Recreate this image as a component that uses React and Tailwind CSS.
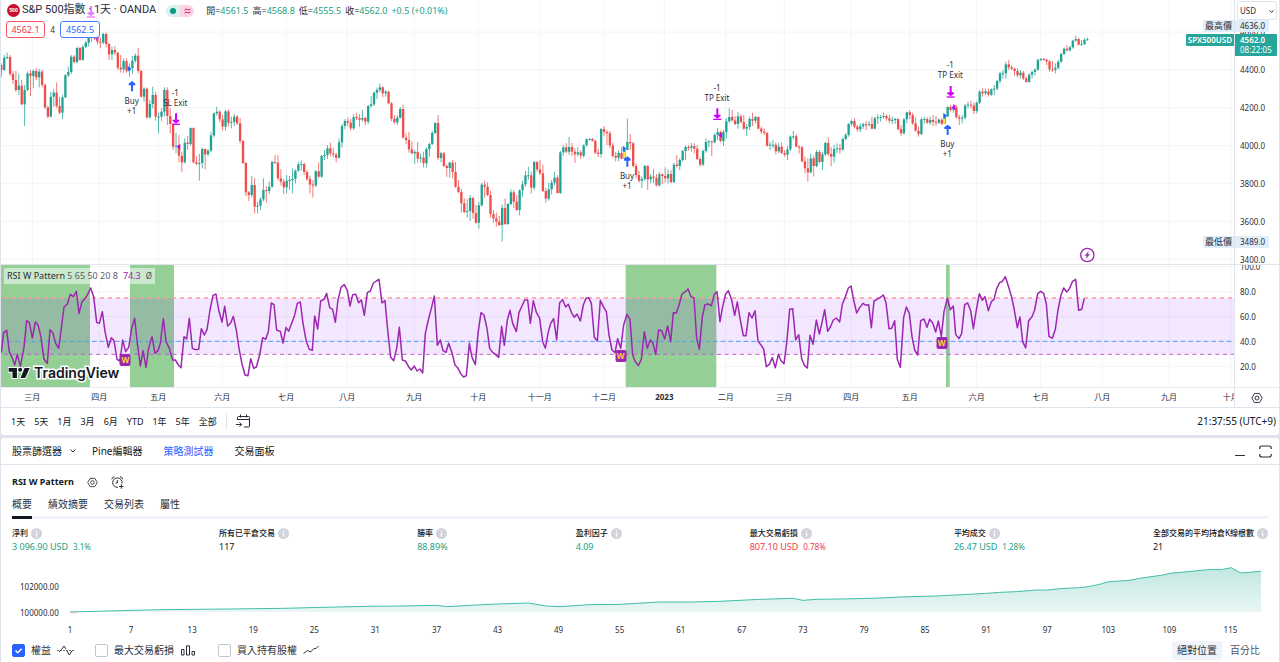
import { useState } from "react";

// Plot space is 3 units per pixel at full width, x from 3 to 3702.
// Every bar is [high, low, close] and opens at the previous close.
const PLOT_X = 3;
const PLOT_W = 3699;
const PLOT_END = 3702;
const STEP = 8.735;
const FIRST_OPEN = 195;
const BARS = `
190 232 210|165 212 173|158 178 171|165 228 222|213 252 240|213 276 270|222 285 257|240 316 313|255 378 270|215 273 220|210 288 228|208 265 213|205 240 232|207 262 215|210 262 255|250 328 322|318 355 350|275 352 290|268 320 278|247 325 318|290 343 338|285 357 292|222 294 226|200 231 216|165 222 170|165 190 186|140 190 144|140 182 180|135 182 141|122 145 128|100 140 112|98 125 105|90 120 108|105 133 125|112 145 128|98 133 102|97 142 132|128 180 163|140 180 150|138 165 158|155 210 203|165 218 208|175 218 183|175 218 212|190 230 205|168 222 182|160 188 167|143 220 213|209 293 290|262 305 266|262 356 352|300 356 312|260 325 285|275 362 350|338 400 350|325 362 335|262 350 270|262 375 348|325 400 372|370 450 440|398 460 437|405 487 467|455 517 487|415 490 428|408 450 432|382 438 384|382 490 487|468 495 492|462 542 489|443 505 447|445 508 463|447 468 452|395 456 406|338 412 340|320 347 335|330 367 358|345 392 380|330 392 334|328 380 368|350 385 366|342 378 350|345 375 370|354 430 423|420 492 489|486 588 577|573 603 585|528 592 555|534 640 620|605 640 617|592 630 598|535 604 570|558 608 573|545 582 560|482 563 486|465 492 488|465 542 535|508 556 545|537 582 562|525 580 542|528 570 540|505 580 537|508 550 512|485 515 493|482 512 492|488 525 516|510 543 537|527 580 554|540 592 556|510 562 514|487 535 530|
465 533 468|450 480 465|435 477 445|428 470 460|443 472 464|458 487 473|415 476 427|372 442 378|357 388 363|353 380 368|357 392 385|342 390 351|338 360 354|343 380 359|330 365 354|350 375 365|315 372 318|288 323 313|275 318 278|263 297 270|250 277 262|258 292 280|270 290 275|273 313 310|306 363 356|345 372 367|345 375 353|321 356 327|314 415 413|400 432 420|396 458 448|425 463 460|450 491 456|426 488 476|460 488 473|455 502 490|442 502 447|428 470 432|393 435 399|367 402 369|345 481 474|456 486 460|456 501 498|493 530 504|485 533 488|480 535 516|486 564 560|540 580 576|566 638 610|595 640 636|597 653 633|585 663 594|590 656 639|615 671 668|606 686 616|549 620 554|542 593 560|547 588 585|572 653 642|630 668 655|638 680 665|648 678 675|614 725 624|595 675 672|609 675 612|568 616 577|570 624 605|585 633 630|568 646 571|542 590 553|513 560 526|500 540 526|515 580 563|483 570 486|484 515 508|480 525 520|494 576 573|564 608 596|548 602 568|540 583 548|515 556 533|525 581 579|453 581 457|435 468 442|429 460 455|411 465 441|429 468 455|445 489 463|442 470 457|450 477 467|433 473 436|415 440 418|414 421 417|414 425 422|420 462 458|446 471 462|384 472 387|378 407 396|390 435 400|393 445 436|428 472 468|456 484 473|450 484 459|
442 478 476|440 475 450|356 448 426|402 450 430|425 502 498|490 535 525|512 548 542|530 564 537|495 542 498|495 570 538|522 550 530|506 550 534|522 560 556|516 560 523|520 552 528|502 548 535|508 550 522|510 550 546|489 549 494|465 503 498|474 510 480|450 484 453|436 480 441|435 452 443|429 455 438|430 460 446|435 480 477|472 500 494|448 498 453|415 458 426|420 442 424|422 468 427|400 430 405|383 420 396|392 427 423|390 438 396|354 416 364|325 368 351|330 365 361|348 376 372|335 386 349|342 370 366|345 390 386|372 408 381|350 390 357|338 378 362|348 370 351|349 388 386|380 402 395|385 405 399|396 440 437|426 450 434|420 445 434|427 463 454|429 459 440|427 462 459|450 470 464|438 480 448|406 453 410|393 418 409|402 442 440|435 460 442|438 487 484|470 520 505|475 545 517|460 520 475|468 530 498|450 502 456|450 490 486|455 510 463|425 468 429|412 468 462|442 498 470|434 488 447|430 460 445|432 462 449|413 452 417|399 421 405|370 410 372|358 378 363|354 385 380|375 395 388|370 396 379|368 387 373|363 390 375|363 380 372|350 388 386|350 388 355|343 372 352|345 365 351|338 356 348|343 362 355|345 370 362|350 372 360|353 372 357|355 392 387|375 407 400|354 404 358|335 370 337|330 358 345|338 375 370|352 395 392|380 410 402|
352 405 358|350 370 357|352 372 368|350 375 360|345 378 366|348 378 368|355 372 359|355 375 371|342 372 350|318 350 321|315 335 330|312 338 322|315 355 352|345 375 356|345 370 353|312 358 317|305 325 314|303 325 317|308 342 333|304 340 308|270 312 275|265 290 280|266 286 274|265 290 284|265 288 268|255 285 266|240 270 243|215 250 220|210 236 220|185 236 193|180 210 202|195 210 206|203 228 213|205 232 226|210 235 218|213 240 235|230 248 246|220 248 224|212 235 216|205 226 209|175 212 180|174 184 177|174 182 179|176 195 184|180 215 208|183 215 209|190 220 203|180 208 185|158 188 162|142 166 146|135 155 151|138 155 142|120 146 122|107 125 117|113 136 134|120 137 132|115 135 119|113 122 118`
  .replace(/\n/g, "")
  .split("|")
  .map((b) => b.split(" ").map(Number));

// RSI line, recorded in four blocks: [x offset, points]
const RSI = [
  [0, "4,278 11,218 20,211 28,275 36,292 44,315 52,283 61,320 72,262 80,182 88,188 97,234 106,186 114,194 123,232 132,298 142,310 150,209 159,220 167,250 176,265 184,205 192,141 202,132 211,103 220,110 229,94 237,160 246,125 254,117 263,103 272,84 281,110 290,187 298,190 307,155 315,215 325,262 334,233 342,242 351,298 360,303 368,240 377,275 386,262 395,205 404,175 412,250 421,318 429,272 438,322 446,265 456,230 465,280 474,272 481,250 490,176 498,245 508,265 518,300 526,300 535,315 543,323 552,230 560,237 568,175 577,265 586,269 596,268 604,206 613,225 621,209 630,150 639,106 648,102 656,150 666,186 674,139 683,198 692,189 700,169 709,210 717,265 726,312 735,345 744,347 752,296 761,325 769,321 779,285 788,233 797,238 805,215 814,129 822,134 830,210 841,214 849,249 858,202 866,214 875,190 883,169 892,130 901,126 909,190 919,245 928,268 937,271 944,168 953,207"],
  [960, "2,123 12,118 20,100 29,143 38,148 46,187 54,120 63,82 73,74 82,92 90,138 98,104 107,103 116,128 124,120 133,166 142,98 151,93 160,69 169,63 177,58 186,129 195,122 203,210 212,292 221,302 230,265 238,202 247,300 256,303 266,320 274,330 283,318 291,333 300,327 308,339 316,220 325,180 334,145 343,108 352,256 361,240 369,272 378,277 386,250 396,278 405,315 413,323 422,341 431,351 439,347 448,250 456,292 466,314 474,220 483,158 492,165 501,205 509,265 518,277 527,284 536,292 545,199 553,256 562,180 570,151 578,190 589,215 597,157 606,138 614,120 623,120 631,190 640,122 649,157 659,175 668,245 676,265 684,220 692,190 701,176 710,240 719,128 728,119 737,141 745,133 754,157 763,172 771,162 781,183 790,135 798,115 806,113 814,130 823,232 832,243 841,121 850,140 859,155 867,225 876,270 885,278 893,236 902,265 911,195 921,163 930,178 938,285 946,305 955,317"],
  [1920, "4,298 13,215 22,265 31,240 39,250 47,283 56,210 65,212 74,237 83,198 92,245 100,158 109,159 117,135 126,102 136,95 144,87 153,110 162,114 170,235 178,268 187,170 195,134 204,132 214,137 223,103 231,95 240,185 248,140 257,102 265,92 275,120 284,166 292,126 301,180 310,227 318,227 327,158 336,174 345,152 354,243 362,254 371,267 379,320 388,313 397,293 406,323 415,283 423,302 432,311 440,250 449,148 458,146 467,240 476,224 485,296 493,316 502,324 510,226 519,253 529,180 538,222 546,187 554,149 563,214 571,201 580,180 589,174 599,186 607,133 616,110 625,84 633,78 641,120 650,159 659,143 669,130 678,136 686,134 694,203 702,123 711,118 720,113 730,105 738,128 747,206 755,205 764,182 772,298 781,322 791,172 799,141 808,160 816,230 824,270 833,285 842,182 852,177 861,202 869,178 878,189 887,216 895,183 904,229 912,155 922,115 931,149 940,138 947,223 957,236 965,220 974,134 983,129"],
  [2850, "62,152 70,206 79,150 88,101 97,121 105,110 115,152 124,125 132,118 140,86 149,68 157,64 166,50 175,78 184,108 192,145 202,203 210,171 218,245 227,264 236,182 246,170 254,150 263,101 272,94 281,100 289,132 297,229 307,235 316,208 324,150 333,105 341,84 350,96 358,87 367,65 377,58 386,151 395,148 403,115"],
];

const shift = (blocks) =>
  blocks
    .map(([dx, pts]) => pts.split(" ").map((p) => { const [x, y] = p.split(","); return `${+x + dx},${y}`; }).join(" "))
    .join(" ");

const pct = (x) => `${((x - PLOT_X) / PLOT_W) * 100}%`;

const EQUITY = [
  [0, "210,531 480,524 690,522 850,520 970,517 1100,514"],
  [1200, "0,513 110,511 140,515 230,510 290,507 385,504 440,513 480,515 570,509 660,508 780,501 870,501 960,499 1080,493 1180,490 1210,496 1250,493"],
  [2520, "0,492 100,490 180,486 290,483 440,475 480,472 530,470 590,465 625,465 660,461 720,458 745,455 775,449 808,440 870,436 900,430 970,420 990,415 1045,410 1115,403 1145,404 1175,398 1203,414 1264,409"],
];

const MONTHS = [
  [97, "三月"], [298, "四月"], [475, "五月"], [667, "六月"], [859, "七月"], [1042, "八月"], [1243, "九月"],
  [1435, "十月"], [1619, "十一月"], [1812, "十二月"], [1993, "2023"], [2177, "二月"], [2353, "三月"],
  [2554, "四月"], [2729, "五月"], [2930, "六月"], [3122, "七月"], [3307, "八月"], [3507, "九月"], [3692, "十月"],
];

const NOTES = [
  { x: 395, top: 96, lines: ["Buy", "+1"] },
  { x: 526, top: 88, lines: ["-1", "SL Exit"] },
  { x: 1881, top: 171, lines: ["Buy", "+1"] },
  { x: 2151, top: 83, lines: ["-1", "TP Exit"] },
  { x: 2842, top: 139, lines: ["Buy", "+1"] },
  { x: 2851, top: 60, lines: ["-1", "TP Exit"] },
];

const METRICS = [
  { label: "淨利", value: "3 096.90 USD", pct: "3.1%", color: "text-[#22a085]" },
  { label: "所有已平倉交易", value: "117", color: "text-[#131722]" },
  { label: "勝率", value: "88.89%", color: "text-[#22a085]" },
  { label: "盈利因子", value: "4.09", color: "text-[#22a085]" },
  { label: "最大交易虧損", value: "807.10 USD", pct: "0.78%", color: "text-[#f23645]" },
  { label: "平均成交", value: "26.47 USD", pct: "1.28%", color: "text-[#22a085]" },
  { label: "全部交易的平均持倉K線根數", value: "21", color: "text-[#131722]" },
];

function UpArrow({ x, y }) {
  return <path d={`M${x - 3} ${y + 30}V${y + 12}H${x - 10}V${y + 7}L${x} ${y - 1}L${x + 10} ${y + 7}V${y + 12}H${x + 3}V${y + 30}Z`} fill="#2962ff" />;
}

function DownArrow({ x, y, opacity = 1 }) {
  return (
    <g fill="#d500f9" opacity={opacity}>
      <path d={`M${x - 3} ${y}V${y + 19}H${x - 10}V${y + 23}L${x} ${y + 31}L${x + 10} ${y + 23}V${y + 19}H${x + 3}V${y}Z`} />
      <rect x={x - 12} y={y + 31} width="24" height="4" />
    </g>
  );
}

function Candles() {
  return BARS.map(([h, l, c], i) => {
    const o = i ? BARS[i - 1][2] : FIRST_OPEN;
    const x = 4 + i * STEP;
    return (
      <g key={i} fill={c <= o ? "#1fa393" : "#ef4f4c"}>
        <rect x={x - 1.4} y={h} width="2.8" height={l - h} opacity="0.8" />
        <rect x={x - 3.5} y={Math.min(o, c)} width="7" height={Math.max(Math.abs(c - o), 3)} />
      </g>
    );
  });
}

function PricePlot() {
  return (
    <svg className="block w-full h-[264px]" viewBox="3 0 3699 792" preserveAspectRatio="none">
      <g stroke="#f3f4f6" strokeWidth="3">
        {[96, 210, 323, 437, 550, 664, 777].map((y) => <line key={y} x1="0" x2={PLOT_END} y1={y} y2={y} />)}
        {MONTHS.map(([x]) => <line key={x} x1={x} x2={x} y1="0" y2="792" />)}
      </g>
      <Candles />
      <rect x="1870" y="456" width="6" height="18" fill="#ffeb3b" />
      <rect x="2830" y="356" width="6" height="15" fill="#ffeb3b" />
      {[[396, 244], [1882, 470], [2843, 375]].map(([x, y]) => <UpArrow key={x} x={x} y={y} />)}
      {[[528, 340], [2152, 325], [2852, 258]].map(([x, y]) => <DownArrow key={x} x={x} y={y} />)}
      {[[388, 206], [1873, 446], [2835, 347]].map(([x, y]) => <path key={x} d={`M${x - 5} ${y - 9}L${x + 6} ${y}L${x - 5} ${y + 9}Z`} fill="#2962ff" />)}
      {[[536, 440], [2161, 406], [2861, 322]].map(([x, y]) => <path key={x} d={`M${x + 5} ${y - 9}L${x - 6} ${y}L${x + 5} ${y + 9}Z`} fill="#d500f9" />)}
      <path d="M292 104L281 113L292 122Z" fill="#d500f9" opacity="0.5" />
      <g transform="translate(3262 765)" stroke="#9c27b0" fill="none">
        <circle r="20" strokeWidth="4" fill="#fff" />
        <path d="M3 -10L-7 2H-1L-3 10L7 -2H1Z" fill="#9c27b0" strokeWidth="1" />
      </g>
    </svg>
  );
}

function RsiPlot() {
  return (
    <svg className="block w-full h-[123px]" viewBox="3 15 3699 369" preserveAspectRatio="none">
      <g stroke="#f3f4f6" strokeWidth="3">
        {[20, 95, 170, 245, 320].map((y) => <line key={y} x1="0" x2={PLOT_END} y1={y} y2={y} />)}
        {MONTHS.map(([x]) => <line key={x} x1={x} x2={x} y1="0" y2="384" />)}
      </g>
      <g fill="#94d096">
        <rect x="0" y="10" width="270" height="380" />
        <rect x="390" y="10" width="132" height="380" />
        <rect x="1877" y="10" width="272" height="380" />
        <rect x="2838" y="10" width="11" height="380" />
      </g>
      <rect x="0" y="114" width={PLOT_END} height="169" fill="#9c30ff" opacity="0.12" />
      <line x1="12" x2={PLOT_END} y1="114" y2="114" stroke="#fa9ea3" strokeWidth="4" strokeDasharray="12 12" />
      <line x1="0" x2={PLOT_END} y1="244" y2="244" stroke="#4da3ee" strokeWidth="3" strokeDasharray="14 9" />
      <line x1="12" x2={PLOT_END} y1="283" y2="283" stroke="#bd5fce" strokeWidth="3" strokeDasharray="12 11" />
      <polyline points={shift(RSI)} fill="none" stroke="#9c27b0" strokeWidth="4.5" strokeLinejoin="round" />
    </svg>
  );
}

function TvMark() {
  return (
    <svg className="w-[23px] h-[14px]" viewBox="0 0 36 20">
      <g fill="#131722" stroke="#fff" strokeWidth="3" paintOrder="stroke">
        <path d="M14 18H7V8H1V2H14Z" />
        <circle cx="19" cy="5" r="3.2" />
        <path d="M27 18H19.5L26 2H34Z" />
      </g>
    </svg>
  );
}

function Hex({ className }) {
  return (
    <svg className={className} viewBox="0 0 18 18" fill="none" stroke="#2a2e39" strokeWidth="1.4">
      <path d="M5.2 2.2H12.8L16.8 9L12.8 15.8H5.2L1.2 9Z" strokeLinejoin="round" />
      <circle cx="9" cy="9" r="3" />
    </svg>
  );
}

function Info() {
  return (
    <svg className="w-[11px] h-[11px]" viewBox="0 0 11 11">
      <circle cx="5.5" cy="5.5" r="5.5" fill="#d1d4dc" />
      <path d="M5.5 2.5V3.8M5.5 4.8V8.5" stroke="#fff" strokeWidth="1.3" />
    </svg>
  );
}

function Overlay() {
  return (
    <div className="absolute left-[5px] top-0 flex flex-col">
      <div className="flex items-center h-[21px]">
        <span className="ml-px flex items-center justify-center w-[13px] h-[13px] rounded-full bg-[#c8102e] text-white text-[5px] font-bold">500</span>
        <h1 className="ml-[2px] font-[Roboto,'Noto_Sans_CJK_TC',sans-serif] text-[11px] text-[#2a2e39] whitespace-nowrap">S&amp;P 500指數 · 1天 · OANDA</h1>
        <span className="ml-[10px] flex w-[28px] h-[12px] rounded-full overflow-hidden">
          <span className="flex-1 flex items-center justify-center bg-[#d9f1ee]"><i className="w-[6px] h-[6px] rounded-full bg-[#089981]" /></span>
          <span className="flex-1 flex items-center justify-center bg-[#fbd3e1]">
            <svg className="w-[7px] h-[6px]" viewBox="0 0 7 6" fill="none" stroke="#d81b60" strokeWidth="1"><path d="M.5 2Q2 .5 3.500 1.500T6.500 1M.5 5Q2 3.500 3.500 4.500T6.500 4" /></svg>
          </span>
        </span>
        <p className="ml-[12px] flex gap-[4px] text-[9px] text-[#22a085] whitespace-nowrap">
          <span><b className="font-normal text-[#2a2e39]">開=</b>4561.5</span>
          <span><b className="font-normal text-[#2a2e39]">高=</b>4568.8</span>
          <span><b className="font-normal text-[#2a2e39]">低=</b>4555.5</span>
          <span><b className="font-normal text-[#2a2e39]">收=</b>4562.0</span>
          <span>+0.5 (+0.01%)</span>
        </p>
      </div>
      <div className="flex items-center text-[9px]">
        <button className="w-[39px] h-[17px] rounded-[3px] border border-[#f7525f] bg-white text-[#f23645]">4562.1</button>
        <span className="w-[15px] text-center text-[8px] text-[#2a2e39]">4</span>
        <button className="w-[40px] h-[17px] rounded-[3px] border border-[#4a7bff] bg-white text-[#2962ff]">4562.5</button>
      </div>
    </div>
  );
}

function PriceRow() {
  return (
    <div className="flex border-b border-[#e0e3eb] h-[265px]">
      <div className="relative flex-1 min-w-0">
        <PricePlot />
        {NOTES.map((n) => (
          <div key={n.x} className="absolute -translate-x-1/2 text-center text-[8px] leading-[10px] text-[#2a2e39] whitespace-nowrap" style={{ left: pct(n.x), top: n.top }}>
            {n.lines.map((t) => <div key={t}>{t}</div>)}
          </div>
        ))}
        <Overlay />
        <svg className="absolute left-[85px] top-[5px] w-[10px] h-[14px]" viewBox="258 15 30 42"><DownArrow x={273} y={18} opacity={0.5} /></svg>
        <span className="absolute right-0 top-[20px] h-[12px] px-[2px] bg-[#e0edfb] text-[9px] leading-[12px] text-[#2a2e39]">最高價</span>
        <span className="absolute right-0 top-[34px] h-[12px] px-[2px] rounded-l-[1px] bg-[#26a69a] text-[8px] leading-[12px] font-semibold text-white">SPX500USD</span>
        <span className="absolute right-0 top-[236px] h-[12px] px-[2px] bg-[#e0edfb] text-[9px] leading-[12px] text-[#2a2e39]">最低價</span>
      </div>
      <div className="relative w-[45px] shrink-0 border-l border-[#e0e3eb] overflow-hidden text-[8px] text-[#2a2e39]">
        <div className="flex flex-col pt-[13px]">
          {["4600.0", "4400.0", "4200.0", "4000.0", "3800.0", "3600.0", "3400.0"].map((p) => (
            <span key={p} className="h-[38px] shrink-0 pl-[5px] leading-[38px]">{p}</span>
          ))}
        </div>
        <div className="absolute inset-x-0 top-0 h-[20px] bg-white pl-[2px] pr-[2px] pt-px">
          <div className="relative">
            <select aria-label="Currency" defaultValue="USD" className="block w-full h-[19px] appearance-none rounded-[3px] border border-[#e0e3eb] bg-white pl-[2px] text-[8px]"><option>USD</option></select>
            <svg className="absolute right-[3px] top-[9px] w-[5px] h-[3px] pointer-events-none" viewBox="0 0 5 3" fill="none" stroke="#2a2e39"><path d="M.5 .5L2.500 2.300L4.500 .5" /></svg>
          </div>
        </div>
        <span className="absolute left-0 top-[20px] w-[34px] h-[12px] bg-[#e0edfb] pl-[5px] leading-[12px]">4636.0</span>
        <div className="absolute left-0 top-[34px] w-[42px] rounded-r-[1px] bg-[#26a69a] pl-[5px] py-px leading-[10px] text-white">
          <div className="font-semibold">4562.0</div>
          <div>08:22:05</div>
        </div>
        <span className="absolute left-0 top-[236px] w-[34px] h-[12px] bg-[#e0edfb] pl-[5px] leading-[12px]">3489.0</span>
      </div>
    </div>
  );
}

function RsiRow() {
  return (
    <div className="flex border-b border-[#e9ebf0] h-[123px]">
      <div className="relative flex-1 min-w-0 overflow-hidden">
        <RsiPlot />
        <div className="absolute left-[3px] top-[3px] flex items-center gap-[5px] h-[16px] px-[3px] bg-white/50 text-[9px] text-[#4a4e59] whitespace-nowrap">
          <span className="text-[#2a2e39]">RSI W Pattern <span className="text-[#5d606b]">5 65 50 20 8</span></span>
          <span className="text-[#9c27b0]">74.3</span>
          <span className="text-[8px]">Ø</span>
        </div>
        {[[376, 89], [1862, 85], [2825, 72]].map(([x, y]) => (
          <span key={x} className="absolute -translate-x-1/2 w-[11px] h-[12px] rounded-[2px] bg-[#9c27b0] text-center text-[8px] leading-[11px] font-bold text-[#fdd835]" style={{ left: pct(x), top: y }}>W</span>
        ))}
        <div className="absolute left-[7px] top-[98px] flex items-center gap-[3px]">
          <TvMark />
          <svg className="w-[92px] h-[20px] overflow-visible"><text x="0" y="15" fill="#131722" stroke="#fff" strokeWidth="3" paintOrder="stroke" className="font-[Inter,sans-serif] text-[14px] font-semibold">TradingView</text></svg>
        </div>
      </div>
      <div className="w-[45px] shrink-0 border-l border-[#e0e3eb] overflow-hidden text-[8px] text-[#2a2e39]">
        <div className="-mt-[11px] flex flex-col">
          {["100.0", "80.0", "60.0", "40.0", "20.0"].map((p) => <span key={p} className="h-[25px] pl-[5px] leading-[25px]">{p}</span>)}
        </div>
      </div>
    </div>
  );
}

function TimeRow() {
  return (
    <div className="flex h-[20px] border-b border-[#e0e3eb]">
      <div className="relative flex-1 min-w-0 overflow-hidden">
        {MONTHS.map(([x, t]) => (
          <span key={x} className={`absolute top-0 -translate-x-1/2 text-[8px] leading-[18px] text-[#2a2e39] whitespace-nowrap ${t === "2023" ? "font-bold" : ""}`} style={{ left: pct(x) }}>{t}</span>
        ))}
      </div>
      <button aria-label="Axis settings" className="flex items-center justify-center w-[45px] shrink-0 border-l border-[#e0e3eb]"><Hex className="w-[12px] h-[12px]" /></button>
    </div>
  );
}

function RangeBar() {
  return (
    <div className="flex items-center h-[27px] pl-[10px] pr-[3px] text-[9px] text-[#131722]">
      <div className="flex gap-[9px]">
        {["1天", "5天", "1月", "3月", "6月", "YTD", "1年", "5年", "全部"].map((r) => <button key={r}>{r}</button>)}
      </div>
      <span className="mx-[9px] w-px h-[15px] bg-[#e0e3eb]" />
      <button aria-label="Go to date">
        <svg className="w-[15px] h-[15px]" viewBox="0 0 15 15" fill="none" stroke="#2a2e39">
          <path d="M1.500 6V3.500Q1.500 2.500 2.500 2.500H12.500Q13.500 2.500 13.500 3.500V12Q13.500 13 12.500 13H8M1.500 5.500H13.500M4.500 .5V3.500M10.500 .5V3.500M0 10.500H5.500M3.500 8.300L5.700 10.500L3.500 12.700" />
        </svg>
      </button>
      <span className="ml-auto text-[10px]">21:37:55 (UTC+9)</span>
    </div>
  );
}

function EquityChart() {
  const pts = shift(EQUITY);
  const ticks = Array.from({ length: 20 }, (_, i) => 1 + i * 6);
  return (
    <div className="flex pr-[18px] pl-[19px] text-[8px] text-[#2a2e39]">
      <div className="w-[50px] shrink-0 flex flex-col gap-[14px] pt-[20px] leading-[12px]">
        <span>102000.00</span>
        <span>100000.00</span>
      </div>
      <div className="flex-1 min-w-0">
        <svg className="block w-full h-[52px] overflow-visible" viewBox="210 378 3574 156" preserveAspectRatio="none">
          <defs>
            <linearGradient id="eq" x1="0" y1="0" x2="0" y2="1">
              <stop offset="0" stopColor="#22ab94" stopOpacity="0.28" />
              <stop offset="1" stopColor="#22ab94" stopOpacity="0.1" />
            </linearGradient>
          </defs>
          <polygon points={`210,531 ${pts} 3784,531`} fill="url(#eq)" />
          <polyline points={pts} fill="none" stroke="#42bda8" strokeWidth="3" />
          <path d="M210 533H232" stroke="#f7a1a7" strokeWidth="2" />
        </svg>
        <div className="relative h-[24px] mt-[3px]">
          {ticks.map((t) => (
            <span key={t} className="absolute top-[6px] -translate-x-1/2 leading-[16px]" style={{ left: `${((t - 1) / 117) * 100}%` }}>{t}</span>
          ))}
        </div>
      </div>
    </div>
  );
}

function Toggle({ label, checked, onChange, children }) {
  return (
    <label className="flex items-center gap-[6px]">
      <span className="relative w-[13px] h-[13px]">
        <input type="checkbox" checked={checked} onChange={onChange} className="block w-[13px] h-[13px] appearance-none rounded-[2px] border border-[#c1c4cd] bg-white checked:border-[#2962ff] checked:bg-[#2962ff]" />
        {checked && <svg className="absolute inset-0 pointer-events-none" viewBox="0 0 13 13" fill="none" stroke="#fff" strokeWidth="1.500"><path d="M3.500 6.500L5.700 8.700L9.700 4.700" /></svg>}
      </span>
      {label}
      <svg className="w-[17px] h-[11px]" viewBox="0 0 17 11" fill="none" stroke="#2a2e39">{children}</svg>
    </label>
  );
}

function Tester() {
  const [shown, setShown] = useState({ equity: true, drawdown: false, hold: false });
  const flip = (k) => () => setShown({ ...shown, [k]: !shown[k] });

  return (
    <section className="flex-1 mt-[3px] mr-px ml-px rounded-t-[3px] bg-white text-[#131722]">
      <div className="flex items-center h-[27px] pl-[11px] pr-[7px] border-b border-[#e0e3eb] text-[10px]">
        <button className="flex items-center gap-[8px]">
          股票篩選器
          <svg className="w-[6px] h-[4px]" viewBox="0 0 6 4" fill="none" stroke="#2a2e39"><path d="M.5 .5L3 3L5.500 .5" /></svg>
        </button>
        <button className="ml-[16px]">Pine編輯器</button>
        <button className="ml-[21px] text-[#2962ff]">策略測試器</button>
        <button className="ml-[21px]">交易面板</button>
        <button aria-label="Minimize" className="ml-auto"><svg className="w-[11px] h-[12px]" viewBox="0 0 11 12"><path d="M0 10.500H10" stroke="#2a2e39" /></svg></button>
        <button aria-label="Maximize" className="ml-[13px]">
          <svg className="w-[13px] h-[13px]" viewBox="0 0 13 13" fill="none" stroke="#2a2e39" strokeWidth="1.200"><path d="M.8 4V3Q.8 1 3 1H10Q12.200 1 12.200 3V4M.8 9V10Q.8 12 3 12H10Q12.200 12 12.200 10V9" /></svg>
        </button>
      </div>

      <div className="px-[11px]">
        <div className="flex items-center gap-[13px] pt-[8px] h-[26px]">
          <h2 className="text-[9px] font-bold">RSI W Pattern</h2>
          <button aria-label="Settings"><Hex className="w-[11px] h-[11px]" /></button>
          <button aria-label="Add alert">
            <svg className="w-[13px] h-[13px]" viewBox="0 0 13 13" fill="none" stroke="#2a2e39">
              <path d="M7 11.300A4.700 4.700 0 1 1 11 7.500M6.300 4V7H4.500M.8 3.300Q1 1 3.500 .8M9 .8Q11.500 1 11.700 3.300M10.300 8.300V12.700M8.100 10.500H12.500" />
            </svg>
          </button>
        </div>

        <nav className="mt-[2px] flex gap-[16px] h-[26px] border-b-3 border-[#f0f3fa] text-[10px] text-[#2a2e39]">
          <button className="h-[26px] shrink-0 border-b-3 border-[#131722]">概要</button>
          <button>績效摘要</button>
          <button>交易列表</button>
          <button>屬性</button>
        </nav>

        <dl className="flex justify-between mt-[7px]">
          {METRICS.map((m) => (
            <div key={m.label}>
              <dt className="flex items-center gap-[3px] text-[8px] leading-[14px] font-medium">{m.label}<Info /></dt>
              <dd className={`text-[9px] leading-[13px] ${m.color}`}>{m.value}{m.pct && <span className="ml-[5px] text-[8px]">{m.pct}</span>}</dd>
            </div>
          ))}
        </dl>
      </div>

      <div className="mt-[8px]"><EquityChart /></div>

      <div className="flex items-center gap-[21px] h-[20px] px-[11px] text-[10px] text-[#2a2e39]">
        <Toggle label="權益" checked={shown.equity} onChange={flip("equity")}>
          <path d="M2 7L4.500 4.500L7 1L9 4M10 6L12.300 10L15 6" /><path d="M0 5.500H17" strokeDasharray="2 1" strokeWidth=".7" />
        </Toggle>
        <Toggle label="最大交易虧損" checked={shown.drawdown} onChange={flip("drawdown")}>
          <path d="M1.500 4.500H4V10H1.500ZM6.500 .8H9.500V10H6.500ZM12 6.500H14.500V10H12Z" />
        </Toggle>
        <Toggle label="買入持有股權" checked={shown.hold} onChange={flip("hold")}>
          <path d="M.5 8.500L4.500 5.500L7.500 7L11 3.500H13L15.500 1" />
        </Toggle>
        <div className="ml-auto flex">
          <button className="h-[19px] px-[5px] rounded-[3px] bg-[#f0f3fa]">絕對位置</button>
          <button className="h-[19px] px-[8px] text-[#50535e]">百分比</button>
        </div>
      </div>
    </section>
  );
}

export default function App() {
  return (
    <div className="flex flex-col min-h-screen bg-[#e0e3eb] font-['Noto_Sans','Noto_Sans_CJK_TC',sans-serif]">
      <section className="mx-px rounded-b-[3px] bg-white">
        <PriceRow />
        <RsiRow />
        <TimeRow />
        <RangeBar />
      </section>
      <Tester />
    </div>
  );
}
